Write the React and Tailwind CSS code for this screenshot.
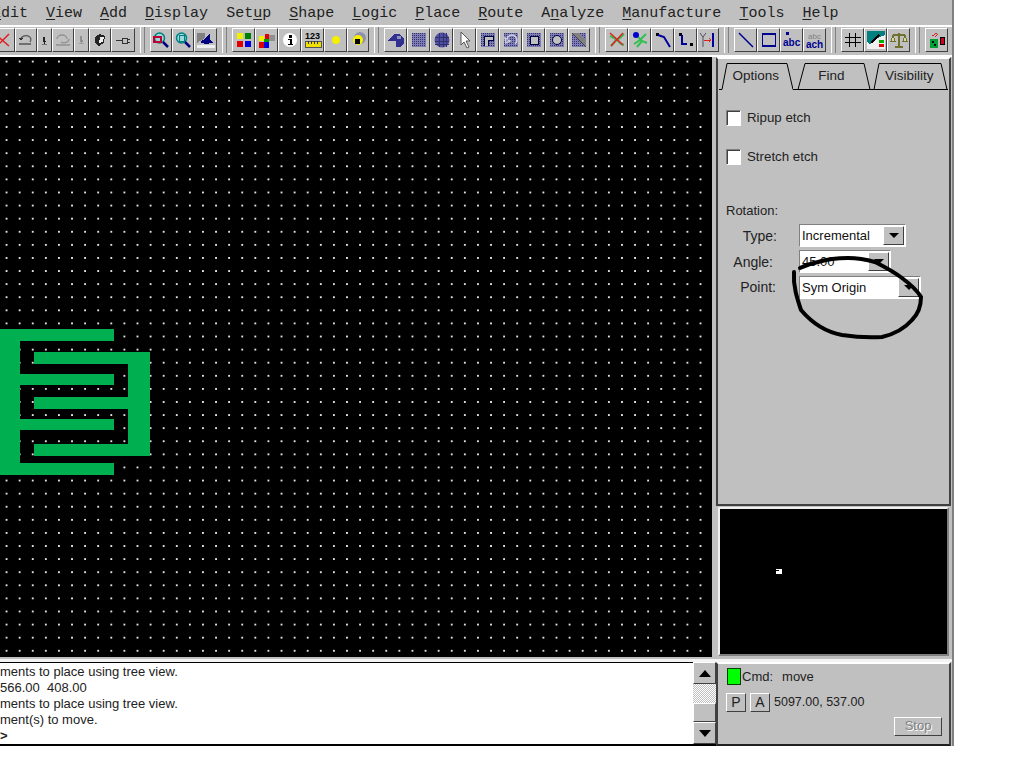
import React from 'react';

const Svg = ({ children }) => (
  <svg width="18" height="18" viewBox="0 0 18 18" shapeRendering="crispEdges">{children}</svg>
);

const Stipple = ({ x = 2, y = 2, w = 14, h = 14 }) => (
  <>
    <rect x={x} y={y} width={w} height={h} fill="#7f7fb5" />
    {Array.from({ length: Math.floor(h / 2) }).map((_, r) =>
      Array.from({ length: Math.floor(w / 2) }).map((_, c) => (
        <rect key={`${r}-${c}`} x={x + c * 2} y={y + r * 2} width="1" height="1" fill="#30306f" />
      ))
    )}
  </>
);

const Magnifier = ({ children }) => (
  <Svg>
    <circle cx="7.5" cy="7" r="5" fill="#9adada" stroke="#007f7f" strokeWidth="1.5" shapeRendering="auto" />
    {children}
    <path d="M11 11l5 5" stroke="#000080" strokeWidth="2.5" shapeRendering="auto" />
  </Svg>
);

const icons = {
  redX: <Svg><path d="M0 3l14 12M14 3L2 15" stroke="#e02020" strokeWidth="1.5" shapeRendering="auto" /></Svg>,
  undoA: <Svg><path d="M4 8a5 4 0 1 1 9 3M2 13h12" fill="none" stroke="#555" strokeWidth="1.3" shapeRendering="auto" /><path d="M2 7l4 0-2 3z" fill="#333" /></Svg>,
  downA: <Svg><path d="M7 5h3v5h2l-3 4-3-4h1z" fill="#222" /><path d="M5 15h8" stroke="#555" /></Svg>,
  undoB: <Svg><path d="M3 8a5 4 0 0 1 10 0M15 8a5 4 0 0 1-8 3M2 14h14" fill="none" stroke="#909090" strokeWidth="1.3" shapeRendering="auto" /></Svg>,
  downB: <Svg><path d="M7 4h3v5h2l-3 4-3-4h1z" fill="#909090" /><path d="M5 14h8" stroke="#909090" /></Svg>,
  eraser: <Svg><path d="M4 6l5-3 5 2-1 7-5 3-4-3z" fill="#222" /><path d="M9 6l4 0-1 5-4 1z" fill="#eee" /></Svg>,
  pin: <Svg><path d="M2 9h6M8 7h5v5H8zM13 8h3M13 11h3" fill="none" stroke="#333" strokeWidth="1" /></Svg>,
  zoomBox: <Magnifier><rect x="2" y="6" width="7" height="5" fill="none" stroke="#c00030" strokeWidth="1.2" /></Magnifier>,
  zoomFit: <Magnifier><rect x="5" y="4" width="5" height="6" fill="none" stroke="#007f7f" /></Magnifier>,
  view3d: <Svg><path d="M3 11l6-4 4-5 0 7 3 3-8 1z" fill="#000080" /><path d="M0 14h18v3H0z" fill="#eee" /><path d="M0 2h8v5L0 12z" fill="#808080" /></Svg>,
  colors: <Svg><rect x="2" y="2" width="6" height="6" fill="#f0f000" /><rect x="10" y="2" width="6" height="6" fill="#008000" /><rect x="2" y="10" width="6" height="6" fill="#e00000" /><rect x="10" y="10" width="6" height="6" fill="#0000e0" /></Svg>,
  colorsB: <Svg><rect x="1" y="5" width="5" height="5" fill="#f0f000" /><rect x="7" y="3" width="4" height="5" fill="#e00000" /><rect x="11" y="4" width="6" height="6" fill="#909090" /><rect x="1" y="11" width="5" height="6" fill="#e00000" /><rect x="6" y="11" width="5" height="6" fill="#0000e0" /><rect x="6" y="8" width="5" height="3" fill="#00a000" /></Svg>,
  info: <Svg><circle cx="9" cy="9" r="7" fill="#fff" shapeRendering="auto" /><rect x="8" y="4" width="2.5" height="2.5" fill="#000" /><path d="M7 8h3.5v5H12v1H7v-1h1.5V9H7z" fill="#000" /></Svg>,
  measure: (
    <Svg>
      <text x="1" y="8" fontSize="9" fontWeight="700" fontFamily="Liberation Sans, sans-serif" fill="#000">123</text>
      <rect x="1" y="10" width="16" height="6" fill="#f0e000" stroke="#555" />
      <path d="M4 10v3M7 10v3M10 10v3M13 10v3" stroke="#333" />
    </Svg>
  ),
  glow: <Svg><circle cx="9" cy="9" r="4" fill="#f4f000" shapeRendering="auto" /></Svg>,
  dotGlow: <Svg><circle cx="11" cy="7" r="6" fill="#8f8fb0" shapeRendering="auto" /><circle cx="9" cy="9" r="5" fill="#f4f000" shapeRendering="auto" /><rect x="6" y="8" width="5" height="5" fill="#000" /></Svg>,
  shapeAdd: <Svg><path d="M1 9l7-6h5l4 5v4l-4 4h-4v-6H1z" fill="#30308f" /><path d="M10 5h4v3h-4z" fill="#8f8fc0" /></Svg>,
  shapeRect: <Svg><Stipple /></Svg>,
  shapeCircle: <Svg><circle cx="9" cy="9" r="7.5" fill="#5050a0" shapeRendering="auto" /><path d="M2 6h14M2 10h14M2 13h14M6 2v14M10 2v14M13 2v14" stroke="#30306f" /></Svg>,
  cursor: <Svg><path d="M5 1v13l3-3 3 6 2-1-3-6h4z" fill="#fff" stroke="#555" shapeRendering="auto" /></Svg>,
  shapeVoid: <Svg><Stipple /><path d="M5 15V5h9v4H9v6" fill="#c0c0c0" stroke="#000040" /></Svg>,
  shapeArc: <Svg><Stipple /><path d="M13 13a5 5 0 1 0-8-5l-2-1 1 5 4-2-2-1" fill="none" stroke="#d0d0e0" strokeWidth="1.5" shapeRendering="auto" /></Svg>,
  shapeHole: <Svg><Stipple /><rect x="5" y="5" width="8" height="8" fill="#c0c0c0" stroke="#000040" /></Svg>,
  shapeRound: <Svg><Stipple /><circle cx="9" cy="9" r="4.5" fill="#c0c0c0" stroke="#000040" shapeRendering="auto" /></Svg>,
  shapeSplit: <Svg><Stipple /><path d="M2 2h7l7 8v6z" fill="#808080" /><path d="M2 2l14 14" stroke="#404040" /></Svg>,
  routeX: <Svg><path d="M2 5l6 3 5 5 3 1M3 15l5-6 4-2 4-4" fill="none" stroke="#30c050" strokeWidth="2" shapeRendering="auto" /><path d="M2 2l13 12M15 2L3 15" stroke="#e02020" strokeWidth="1.5" shapeRendering="auto" /></Svg>,
  routeBlue: <Svg><path d="M6 5l5 5 5 2M3 13l6-4 6-6M6 16l5-6" fill="none" stroke="#30c050" strokeWidth="2" shapeRendering="auto" /><circle cx="5" cy="4" r="3" fill="#0000d0" shapeRendering="auto" /></Svg>,
  routeLine: <Svg><rect x="2" y="2" width="3" height="3" fill="#000" /><path d="M4 4l6 2 6 10" fill="none" stroke="#0000a0" strokeWidth="2" shapeRendering="auto" /></Svg>,
  routeCorner: <Svg><rect x="2" y="2" width="3" height="3" fill="#000" /><path d="M5 4v9h5" fill="none" stroke="#000090" strokeWidth="1.5" /><rect x="13" y="12" width="3" height="3" fill="#000" /></Svg>,
  routeFork: <Svg><path d="M1 2l3 4v10M7 2L4 6" fill="none" stroke="#505060" shapeRendering="auto" /><path d="M14 2v14" stroke="#0000a0" strokeWidth="1.5" /><path d="M5 9h7M10 7l2 2-2 2" fill="none" stroke="#e02020" /></Svg>,
  line: <Svg><path d="M2 2l14 14" stroke="#000090" strokeWidth="1.5" shapeRendering="auto" /></Svg>,
  rect: <Svg><rect x="2.5" y="3" width="13" height="12" fill="none" stroke="#000090" strokeWidth="1.5" /></Svg>,
  abc: (
    <Svg>
      <rect x="3" y="1" width="3" height="3" fill="#000090" />
      <text x="0" y="15" fontSize="10" fontWeight="700" fontFamily="Liberation Sans, sans-serif" fill="#000090">abc</text>
    </Svg>
  ),
  abcAch: (
    <Svg>
      <text x="2" y="8" fontSize="8" fontFamily="Liberation Sans, sans-serif" fill="#808080">abc</text>
      <text x="0" y="17" fontSize="10" fontWeight="700" fontFamily="Liberation Sans, sans-serif" fill="#000090">ach</text>
    </Svg>
  ),
  grid: <Svg><path d="M5.5 2v14M11.5 2v14M1 6.5h16M1 11.5h16" stroke="#000" /></Svg>,
  palette: <Svg><path d="M0 0h18v18H0z" fill="#f0f0f0" /><path d="M0 0h18v4L8 8 3 14 0 10z" fill="#008080" /><path d="M4 12l8-8" stroke="#000" strokeWidth="2" /><rect x="12" y="9" width="5" height="3" fill="#00b000" /><rect x="12" y="13" width="5" height="3" fill="#e00000" /></Svg>,
  scale: <Svg><path d="M9 2v14M3 4h12M5 16h8" stroke="#707030" strokeWidth="1.3" /><path d="M1 10l2-6 2 6zM13 10l2-6 2 6z" fill="#d8d8a0" stroke="#707030" /></Svg>,
  bom: <Svg><rect x="2" y="8" width="8" height="9" fill="#00a030" /><rect x="12" y="6" width="5" height="8" fill="#000" /><rect x="13" y="7" width="3" height="6" fill="#d00020" /><path d="M4 5l5-3M7 6l3-3" stroke="#e02020" /><rect x="4" y="10" width="2" height="2" fill="#000" /><rect x="6" y="13" width="2" height="2" fill="#000" /></Svg>,
};

const toolGroups = [
  [['redX', 23], ['undoA', 22], ['downA', 15], ['undoB', 22], ['downB', 15], ['eraser', 22], ['pin', 24]],
  [['zoomBox', 22], ['zoomFit', 22], ['view3d', 23]],
  [['colors', 23], ['colorsB', 23], ['info', 23], ['measure', 23], ['glow', 23], ['dotGlow', 22]],
  [['shapeAdd', 23], ['shapeRect', 23], ['shapeCircle', 23], ['cursor', 23], ['shapeVoid', 23], ['shapeArc', 23], ['shapeHole', 23], ['shapeRound', 23], ['shapeSplit', 22]],
  [['routeX', 23], ['routeBlue', 23], ['routeLine', 23], ['routeCorner', 23], ['routeFork', 22]],
  [['line', 23], ['rect', 23], ['abc', 23], ['abcAch', 23]],
  [['grid', 23], ['palette', 23], ['scale', 23]],
  [['bom', 23]],
];

const menus = [
  ['', 'E', 'dit'],
  ['', 'V', 'iew'],
  ['', 'A', 'dd'],
  ['', 'D', 'isplay'],
  ['Set', 'u', 'p'],
  ['', 'S', 'hape'],
  ['', 'L', 'ogic'],
  ['', 'P', 'lace'],
  ['', 'R', 'oute'],
  ['A', 'n', 'alyze'],
  ['', 'M', 'anufacture'],
  ['', 'T', 'ools'],
  ['', 'H', 'elp'],
];

const tabs = [
  { label: 'Options', width: 74, d: 'M0 31.5H3L8 5.5H68L74 31.5' },
  { label: 'Find', width: 78, d: 'M0 31.5H78M5 31.5L12 5.5H71L77 31.5' },
  { label: 'Visibility', width: 78, d: 'M0 31.5H78M4 31.5L9 5.5H71L77 31.5' },
];

const raised = 'border border-t-white border-l-white border-r-[#404040] border-b-[#404040] bg-[#c0c0c0]';
const sunken = 'border border-t-[#808080] border-l-[#808080] border-r-white border-b-white';

const ToolButton = ({ name, width }) => (
  <div className={`${raised} h-[24px] flex items-center justify-center overflow-hidden shrink-0`} style={{ width }}>
    {icons[name]}
  </div>
);

const Separator = () => (
  <div className="w-[5px] h-[26px] mx-[5px] shrink-0 border-l border-r border-l-white border-r-[#808080] bg-[#c0c0c0]" />
);

const Tab = ({ label, width, d }) => (
  <div className="relative flex items-center justify-center text-[13.5px] text-[#222]" style={{ width }}>
    <svg className="absolute inset-0" width={width} height="32">
      <path d={d} fill="none" stroke="#000" strokeWidth="1" />
    </svg>
    <span className="relative mt-[5px]">{label}</span>
  </div>
);

const Combo = ({ label, value, labelPad, labelTop, boxWidth, mt }) => (
  <div className={`flex items-center h-[23px] ${mt}`}>
    <span className="w-[72px] text-right text-[14px] text-[#222] shrink-0" style={{ paddingRight: labelPad, marginTop: labelTop }}>{label}</span>
    <div className={`${sunken} bg-white h-[23px] flex items-center justify-between p-[1px]`} style={{ width: boxWidth }}>
      <span className="text-[13px] text-[#111] pl-[1px] leading-none">{value}</span>
      <div className={`${raised} w-[21px] h-[19px] flex items-center justify-center`}>
        <div className="w-0 h-0 border-l-[5px] border-r-[5px] border-t-[5px] border-l-transparent border-r-transparent border-t-black" />
      </div>
    </div>
  </div>
);

const Check = ({ label, mt }) => (
  <div className={`flex items-center gap-[6px] ${mt}`}>
    <div className={`${sunken} w-[15px] h-[16px] -ml-[1px] bg-white shadow-[inset_1px_1px_0_#404040]`} />
    <span className="text-[13.3px] text-[#222]">{label}</span>
  </div>
);

const ScrollButton = ({ up }) => (
  <div className={`${raised} h-[22px] flex items-center justify-center`}>
    <div className={`w-0 h-0 border-l-[6px] border-r-[6px] border-l-transparent border-r-transparent ${up ? 'border-b-[7px] border-b-black' : 'border-t-[7px] border-t-black'}`} />
  </div>
);

export default function App() {
  return (
    <div className="w-[1024px] h-[768px] bg-white overflow-hidden font-['Liberation_Sans',sans-serif]">
      <div className="w-[954px] h-[746px] bg-[#c0c0c0] flex flex-col overflow-hidden border-r-2 border-r-[#808080]">
        {/* menu bar */}
        <div className="h-[25px] pt-[3px] flex items-center gap-[18px] -ml-[8px] font-['Liberation_Mono',monospace] text-[15px] text-[#222] shrink-0">
          {menus.map(([pre, key, rest]) => (
            <span key={key + rest} className="whitespace-pre">
              {pre}<span className="underline underline-offset-2">{key}</span>{rest}
            </span>
          ))}
        </div>

        {/* toolbar */}
        <div className="h-[32px] border-t-2 border-t-white flex items-center -ml-[8px] shrink-0 pb-[3px] border-b-2 border-b-white box-border">
          {toolGroups.map((group, i) => (
            <React.Fragment key={i}>
              {i > 0 && <Separator />}
              <div className="flex">
                {group.map(([name, width]) => <ToolButton key={name} name={name} width={width} />)}
              </div>
            </React.Fragment>
          ))}
        </div>

        {/* canvas + side panel */}
        <div className="h-[600px] flex shrink-0">
          <div className="relative w-[712px] bg-black bg-[radial-gradient(circle,#ffffff_0.65px,transparent_0.75px)] bg-[size:13.1px_13.1px] bg-[position:0px_-2px] shrink-0">
            <svg className="absolute left-0 top-[272px]" width="150" height="146" viewBox="0 329 150 146" shapeRendering="crispEdges">
              <path
                d="M0 329H114V341H20V374H114V385H20V419H114V430H20V463H114V475H0Z M34 352H150V456H34V444H128V409H34V397H128V364H34Z"
                fill="#00b050"
              />
            </svg>
          </div>

          <div className="w-[4px] shrink-0" />

          <div className="w-[235px] flex flex-col shrink-0">
            {/* tabs panel */}
            <div className="h-[449px] border-2 border-t-white border-l-[#404040] border-r-[#404040] border-b-[#404040] flex flex-col px-[1px]">
              <div className="flex h-[32px] -mt-[1px] shrink-0">
                {tabs.map((tab) => <Tab key={tab.label} {...tab} />)}
              </div>
              <div className="pl-[8px] pt-[1px] flex flex-col">
                <Check label="Ripup etch" mt="mt-[17px]" />
                <Check label="Stretch etch" mt="mt-[19px]" />
                <span className="text-[13px] text-[#222] -ml-[1px] mt-[34px]">Rotation:</span>
                <Combo label="Type:" value="Incremental" labelPad={22} labelTop={1} boxWidth={107} mt="mt-[4px]" />
                <Combo label="Angle:" value="45.00" labelPad={26} labelTop={2} boxWidth={92} mt="mt-[3px]" />
                <Combo label="Point:" value="Sym Origin" labelPad={23} labelTop={0} boxWidth={122} mt="mt-[3px]" />
              </div>
            </div>
            {/* minimap */}
            <div className="h-[149px] mt-[1px] mx-[2px] bg-black border-2 border-t-[#f0f0f0] border-l-[#f0f0f0] border-r-[#808080] border-b-[#808080] flex items-start">
              <svg className="ml-[56px] mt-[60px]" width="6" height="5" shapeRendering="crispEdges">
                <path d="M0 0h6v5H0z" fill="#fff" />
                <path d="M0 1h3v1H0z" fill="#000" />
              </svg>
            </div>
          </div>
        </div>

        <div className="h-[5px] shrink-0 border-b-[3px] border-b-[#f4f4f4]" />

        {/* console + status */}
        <div className="flex h-[84px] shrink-0">
          <div className="w-[693px] bg-white border-t border-b-2 border-black text-[13px] leading-[16px] text-[#222] pt-[1px] overflow-hidden shrink-0">
            <div className="whitespace-pre">ments to place using tree view.</div>
            <div className="whitespace-pre">566.00  408.00</div>
            <div className="whitespace-pre">ments to place using tree view.</div>
            <div className="whitespace-pre">ment(s) to move.</div>
            <div className="font-bold">&gt;</div>
          </div>
          <div className="w-[23px] flex flex-col border-b-2 border-b-black shrink-0">
            <ScrollButton up />
            <div className="flex-1 bg-[repeating-conic-gradient(#ffffff_0_25%,#c0c0c0_0_50%)] bg-[size:2px_2px] flex flex-col justify-end">
              <div className={`${raised} h-[19px]`} />
            </div>
            <ScrollButton />
          </div>
          <div className="w-[235px] border-2 border-t-white border-l-[#404040] border-r-[#404040] border-b-[#202020] flex flex-col pl-[8px] shrink-0">
            <div className="flex items-center mt-[3px] text-[13px] text-[#222]">
              <div className="w-[14px] h-[17px] ml-[1px] bg-[#00ff00] border border-[#004000] mr-[1px]" />
              <span>Cmd:</span>
              <span className="ml-[9px]">move</span>
            </div>
            <div className="flex items-center h-[19px] mt-[6px] text-[12.5px] text-[#222]">
              <div className={`${raised} w-[20px] h-[19px] flex items-center justify-center text-[14px]`}>P</div>
              <div className={`${raised} w-[20px] h-[19px] flex items-center justify-center text-[14px] ml-[4px]`}>A</div>
              <span className="ml-[4px]">5097.00, 537.00</span>
            </div>
            <div className="flex justify-end mt-[5px] pr-[7px]">
              <div className={`${raised} w-[48px] h-[19px] flex items-center justify-center text-[13px] text-[#808080] [text-shadow:1px_1px_0_#ffffff]`}>Stop</div>
            </div>
          </div>
        </div>
      </div>

      {/* hand-drawn annotation circle over the panel */}
      <svg className="absolute left-0 top-0 pointer-events-none" width="1024" height="768">
        <path
          d="M800 268C808 264 813 263 818 262C828 259 838 258 848 258C858 258 868 260 875 262C885 267 894 272 902 278C910 284 917 290 921 297C921 306 918 314 912 320C905 328 895 334 882 337C868 338 855 337 842 335C826 332 812 323 801 310C797 298 793 286 794 272"
          fill="none"
          stroke="#000"
          strokeWidth="4"
          strokeLinecap="round"
        />
      </svg>
    </div>
  );
}
